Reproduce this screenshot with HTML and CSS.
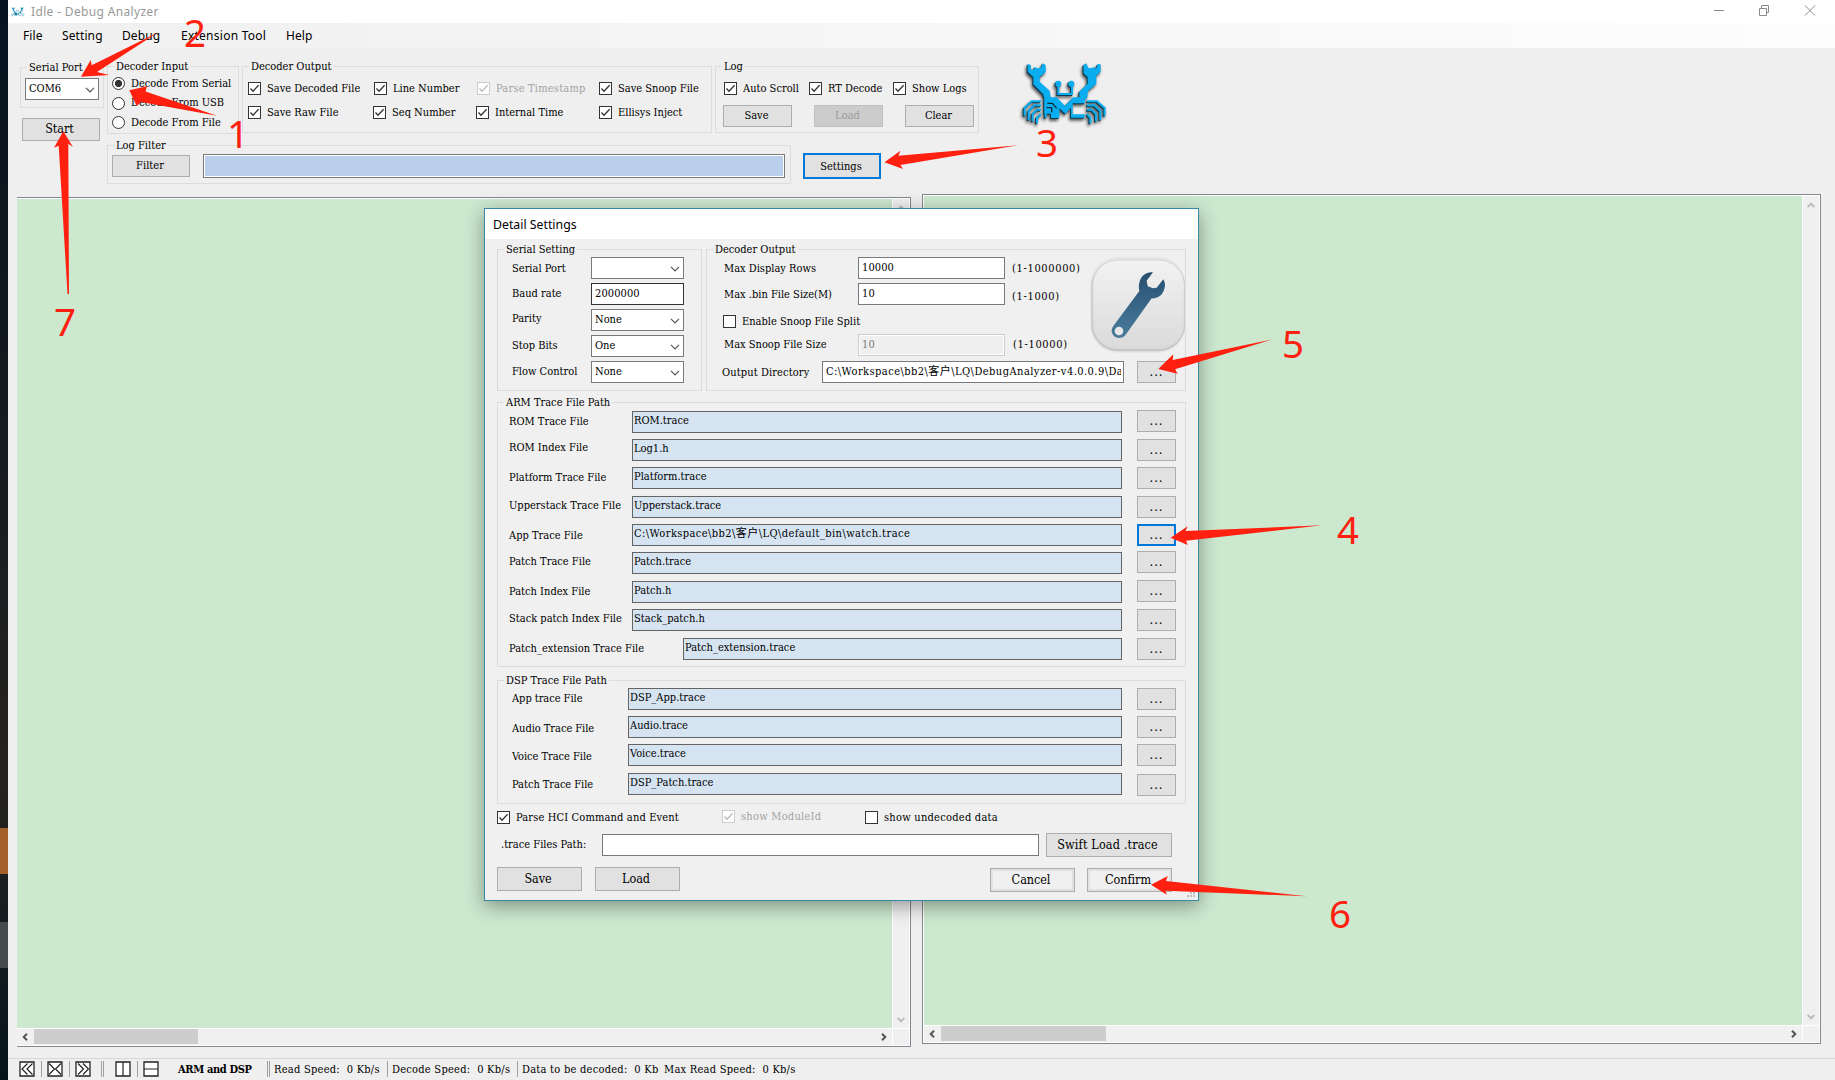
FILE: index.html
```html
<!DOCTYPE html>
<html lang="en">
<head>
<meta charset="utf-8">
<title>Debug Analyzer</title>
<link rel="stylesheet" href="styles.css">
</head>
<body>
<svg class="defs" width="0" height="0">
  <symbol id="tick" viewBox="0 0 13 13"><path d="M2.5 6.5 5 9.2 10.6 3.2" fill="none" stroke="currentColor" stroke-width="1.3"/></symbol>
  <symbol id="drop" viewBox="0 0 10 6"><path d="M1 .8 5 4.8 9 .8" fill="none" stroke="#555" stroke-width="1.2"/></symbol>
  <symbol id="arrow" viewBox="0 0 8 8"><path d="M6 .7 2.7 4 6 7.3" fill="none" stroke="currentColor" stroke-width="2"/></symbol>
  <symbol id="crab" viewBox="0 0 315 240">
    <g fill="currentColor">
      <path d="M50 26 60 31V43L68 45 71 35 79 40 90 38 95 25 104 30V50L94 60 86 65V80L116 107 119 127 137 127 162 152 187 127H205V110L230 86V66L218 55 217 30 226 25 232 39 241 39 251 36 254 44 260 27 269 28V50L256 62V86L231 108 229 127 222 134V145H185V178H221V188H180V158L163 176 145 160V189H120V176H100V128L96 117 67 88V66L50 50Z"/>
      <circle cx="142" cy="86" r="9"/><circle cx="181" cy="86" r="9"/>
    </g>
    <g fill="none" stroke="currentColor" stroke-width="6">
      <path d="M142 90V117H183V90"/>
      <path d="M90 139H62L41 159V182M90 151H70L53 168V195M90 164H78L65 177V199M90 177 78 188V205M228 139H258L281 159V182M228 151H250L268 168V195M228 164H242L255 177V199M228 177 238 188V205M104 130V188"/>
    </g>
    <path d="M109 145H124L137 160M107 158H122V172" fill="none" stroke="#0b2c38" stroke-width="4"/>
  </symbol>
</svg>
<div class="desktop"><i class="tile orange"></i><i class="tile grey"></i></div>
<div class="window">
  <header class="titlebar">
    <svg class="appicon" viewBox="15 15 285 205"><use href="#crab" width="315" height="240"/></svg>
    <span class="apptitle">Idle - Debug Analyzer</span>
    <svg class="winbtns" width="110" height="12" fill="none" stroke="#8a8a8a">
      <path d="M0 6.5h10M45.500 4.500h7v7h-7zM47.500 4.500v-3h7v7h-2M91 1.500l10 10M101 1.500l-10 10"/>
    </svg>
  </header>
  <nav class="menubar"><span class="m1">File</span><span class="m2">Setting</span><span class="m3">Debug</span><span class="m4">Extension Tool</span><span class="m5">Help</span></nav>

  <section class="toolbar">
    <div class="portcol">
      <fieldset class="g-port"><legend>Serial Port</legend>
        <div class="combo">COM6<svg><use href="#drop"/></svg></div>
      </fieldset>
      <button class="btn big start">Start</button>
    </div>
    <div class="maincol">
      <div class="groups">
        <fieldset class="g-input"><legend>Decoder Input</legend>
          <label class="radio on"><i></i>Decode From Serial</label>
          <label class="radio"><i></i>Decode From USB</label>
          <label class="radio"><i></i>Decode From File</label>
        </fieldset>
        <fieldset class="g-output"><legend>Decoder Output</legend>
          <div class="checks">
            <label class="check"><i><svg><use href="#tick"/></svg></i><span>Save Decoded File</span></label>
            <label class="check"><i><svg><use href="#tick"/></svg></i><span>Line Number</span></label>
            <label class="check off stamp"><i><svg><use href="#tick"/></svg></i><span>Parse Timestamp</span></label>
            <label class="check"><i><svg><use href="#tick"/></svg></i><span>Save Snoop File</span></label>
            <label class="check"><i><svg><use href="#tick"/></svg></i><span>Save Raw File</span></label>
            <label class="check left"><i><svg><use href="#tick"/></svg></i><span>Seq Number</span></label>
            <label class="check left"><i><svg><use href="#tick"/></svg></i><span>Internal Time</span></label>
            <label class="check"><i><svg><use href="#tick"/></svg></i><span>Ellisys Inject</span></label>
          </div>
        </fieldset>
        <fieldset class="g-log"><legend>Log</legend>
          <div class="logchecks">
            <label class="check"><i><svg><use href="#tick"/></svg></i><span>Auto Scroll</span></label>
            <label class="check"><i><svg><use href="#tick"/></svg></i><span>RT Decode</span></label>
            <label class="check"><i><svg><use href="#tick"/></svg></i><span>Show Logs</span></label>
          </div>
          <div class="logbtns"><button class="btn">Save</button><button class="btn dis">Load</button><button class="btn">Clear</button></div>
        </fieldset>
      </div>
      <div class="filterrow">
        <fieldset class="g-filter"><legend>Log Filter</legend>
          <div class="filterbody"><button class="btn">Filter</button><div class="filterbox"></div></div>
        </fieldset>
        <button class="btn focus settings">Settings</button>
      </div>
    </div>
    <svg class="logo" width="105" height="80"><use href="#crab"/></svg>
  </section>

  <main class="panes">
    <section class="pane first">
      <div class="view"></div>
      <div class="vbar"><svg class="up"><use href="#arrow"/></svg><svg class="down"><use href="#arrow"/></svg></div>
      <div class="hbar"><svg><use href="#arrow"/></svg><i></i><svg class="right"><use href="#arrow"/></svg></div>
      <div class="corner"></div>
    </section>
    <section class="pane second">
      <div class="view"></div>
      <div class="vbar"><svg class="up"><use href="#arrow"/></svg><svg class="down"><use href="#arrow"/></svg></div>
      <div class="hbar"><svg><use href="#arrow"/></svg><i></i><svg class="right"><use href="#arrow"/></svg></div>
      <div class="corner"></div>
    </section>
  </main>

  <footer class="status">
    <svg width="145" height="16" viewBox="0 0 145 16" fill="none">
      <g fill="#fff" stroke="#222" stroke-width="1.300"><path d="M1 1h14v14H1zM29 1h14v14H29zM57 1h14v14H57zM97 1h14v14H97zM125 1h14v14h-14z"/></g>
      <path stroke="#222" stroke-width="1.200" d="M8.500 2.500 3 8l5.500 5.500M13.500 2.500 8 8l5.500 5.500M30 2.500 35.500 8 30 13.500M42 2.500 36.500 8 42 13.500M59 2.500 64.500 8 59 13.500M64 2.500 69.500 8 64 13.500M104 1v14M125 8h14"/>
      <path stroke="#a0a0a0" d="M22.500 0v16M50.500 0v16M82.500 0v16M84.500 0v16M118.500 0v16"/>
    </svg>
    <b>ARM and DSP</b><i class="sep dbl"></i>
    <span class="s1">Read Speed:&nbsp; 0 Kb/s</span><i class="sep"></i>
    <span class="s2">Decode Speed:&nbsp; 0 Kb/s</span><i class="sep"></i>
    <span class="s3">Data to be decoded:&nbsp; 0 Kb</span>
    <span class="s4">Max Read Speed:&nbsp; 0 Kb/s</span>
  </footer>
</div>

<div class="dialog">
  <div class="dtitle">Detail Settings</div>
  <div class="dtop">
    <fieldset class="g-serial"><legend>Serial Setting</legend>
      <div class="srow"><span>Serial Port</span><div class="combo"><svg><use href="#drop"/></svg></div></div>
      <div class="srow"><span>Baud rate</span><div class="combo strong">2000000</div></div>
      <div class="srow"><span>Parity</span><div class="combo">None<svg><use href="#drop"/></svg></div></div>
      <div class="srow"><span>Stop Bits</span><div class="combo">One<svg><use href="#drop"/></svg></div></div>
      <div class="srow"><span>Flow Control</span><div class="combo">None<svg><use href="#drop"/></svg></div></div>
    </fieldset>
    <fieldset class="g-dec"><legend>Decoder Output</legend>
      <div class="drow"><span>Max Display Rows</span><div class="field">10000</div><span class="range">(1-1000000)</span></div>
      <div class="drow r2"><span>Max .bin File Size(M)</span><div class="field">10</div><span class="range">(1-1000)</span></div>
      <label class="check snoop"><i></i><span>Enable Snoop File Split</span></label>
      <div class="drow r3"><span>Max Snoop File Size</span><div class="field disabled">10</div><span class="range">(1-10000)</span></div>
      <div class="drow r4"><span>Output Directory</span><div class="field dir"><span>C:\Workspace\bb2\客户\LQ\DebugAnalyzer-v4.0.0.9\Da</span></div><button class="btn dots">...</button></div>
      <svg class="wrench" width="110" height="110" viewBox="0 0 330 330">
        <defs>
          <linearGradient id="plate" x1="0" y1="0" x2="0" y2="1"><stop offset="0" stop-color="#f2f2f2"/><stop offset="1" stop-color="#dadada"/></linearGradient>
          <linearGradient id="steel" x1="0" y1="0" x2="0" y2="1"><stop offset="0" stop-color="#264f70"/><stop offset="1" stop-color="#4b7c9d"/></linearGradient>
        </defs>
        <rect x="16" y="24" width="286" height="287" rx="82" fill="#e6e6e6"/>
        <rect x="19" y="34" width="281" height="273" rx="80" fill="#c6c6c6"/>
        <rect x="23" y="33" width="275" height="268" rx="76" fill="url(#plate)" stroke="#c9c9c9" stroke-width="2"/>
        <path d="M204 70 185 95 188 112 204 118 215 116 235 91C243 104 241 123 229 137 219 146 208 149 200 148L122 257C114 268 98 270 88 262 79 254 77 242 85 231L163 126C159 109 163 91 175 79 184 71 195 68 204 70Z" fill="url(#steel)"/>
        <circle cx="102" cy="246" r="13" fill="#e8e8e8"/>
      </svg>
    </fieldset>
  </div>
  <fieldset class="g-arm"><legend>ARM Trace File Path</legend>
    <div class="trow"><span>ROM Trace File</span><div class="path">ROM.trace</div><button class="btn dots">...</button></div>
    <div class="trow"><span>ROM Index File</span><div class="path">Log1.h</div><button class="btn dots">...</button></div>
    <div class="trow"><span>Platform Trace File</span><div class="path">Platform.trace</div><button class="btn dots">...</button></div>
    <div class="trow"><span>Upperstack Trace File</span><div class="path">Upperstack.trace</div><button class="btn dots">...</button></div>
    <div class="trow"><span>App Trace File</span><div class="path long">C:\Workspace\bb2\客户\LQ\default_bin\watch.trace</div><button class="btn dots focus">...</button></div>
    <div class="trow"><span>Patch Trace File</span><div class="path">Patch.trace</div><button class="btn dots">...</button></div>
    <div class="trow"><span>Patch Index File</span><div class="path">Patch.h</div><button class="btn dots">...</button></div>
    <div class="trow"><span>Stack patch Index File</span><div class="path">Stack_patch.h</div><button class="btn dots">...</button></div>
    <div class="trow wide"><span>Patch_extension Trace File</span><div class="path">Patch_extension.trace</div><button class="btn dots">...</button></div>
  </fieldset>
  <fieldset class="g-dsp"><legend>DSP Trace File Path</legend>
    <div class="trow"><span>App trace File</span><div class="path">DSP_App.trace</div><button class="btn dots">...</button></div>
    <div class="trow"><span>Audio Trace File</span><div class="path">Audio.trace</div><button class="btn dots">...</button></div>
    <div class="trow"><span>Voice Trace File</span><div class="path">Voice.trace</div><button class="btn dots">...</button></div>
    <div class="trow"><span>Patch Trace File</span><div class="path">DSP_Patch.trace</div><button class="btn dots">...</button></div>
  </fieldset>
  <div class="options">
    <label class="check"><i><svg><use href="#tick"/></svg></i><span>Parse HCI Command and Event</span></label>
    <label class="check off"><i><svg><use href="#tick"/></svg></i><span>show ModuleId</span></label>
    <label class="check"><i></i><span>show undecoded data</span></label>
  </div>
  <div class="swift"><span>.trace Files Path:</span><div class="field"></div><button class="btn big">Swift Load .trace</button></div>
  <div class="actions"><button class="btn big">Save</button><button class="btn big">Load</button><button class="btn big ring cancel">Cancel</button><button class="btn big ring">Confirm</button></div>
  <svg class="grip" width="9" height="9" fill="#bdbdbd"><path d="M6 0h2v2h-2zM3 3h2v2h-2zM6 3h2v2h-2zM0 6h2v2h-2zM3 6h2v2h-2zM6 6h2v2h-2z"/></svg>
</div>

<svg class="marks" width="1835" height="1080" viewBox="0 0 1835 1080">
  <polygon points="129.300,90.300 147,86.300 145.500,91.500 217,115.700 141,102 136.700,106"/>
  <polygon points="81,76.700 90.700,60 91.700,65.300 158.300,32.300 97,72 109,75"/>
  <polygon points="884.500,162.300 900.400,150.700 898.400,155.700 1018,145.300 900.400,165 903,169"/>
  <polygon points="1170.600,537.700 1187.800,526.300 1185.400,531 1322,525.300 1186,540.700 1187.800,545"/>
  <polygon points="1158.300,369 1173.300,354.300 1172.700,360 1272,339.400 1175,369.300 1177.700,373.700"/>
  <polygon points="1151,884.700 1167.800,876 1166,881 1306.600,896.300 1165.400,890.700 1166.800,894.700"/>
  <polygon points="63.300,131.300 54,147.700 58.700,145.700 67.500,294 69,294 68.300,143.700 73,147"/>
  <text x="227" y="148">1</text>
  <text x="184" y="47">2</text>
  <text x="1036" y="157">3</text>
  <text x="1337" y="544">4</text>
  <text x="1282" y="358">5</text>
  <text x="1329" y="928">6</text>
  <text x="54" y="336">7</text>
</svg>
</body>
</html>
```
FILE: styles.css
```css
* { box-sizing: border-box; }
body {
  margin: 0; width: 1835px; height: 1080px; overflow: hidden; display: flex; position: relative;
  font: 11px/14px "DejaVu Serif Condensed", "DejaVu Serif", "Noto Sans CJK SC", serif;
  font-stretch: condensed; color: #000; background: #efefef;
}
.defs { position: absolute; }
fieldset { margin: 0; padding: 0; border: 1px solid #dcdcdc; min-width: 0; position: relative; }
legend { margin-left: 6px; padding: 0 2px; height: 14px; line-height: 16px; white-space: nowrap; }
span, label, b { white-space: nowrap; }

.desktop { width: 8px; flex: none; background: linear-gradient(#06131f, #12191f 35%, #262320 72%, #141c20 87%, #06131b); display: flex; flex-direction: column; }
.tile { display: block; height: 46px; }
.orange { margin-top: 828px; background: #a55f28; }
.grey { margin-top: 48px; background: #454b4d; }
.window { width: 1827px; display: flex; flex-direction: column; background: #efefef; }

.titlebar { height: 23px; background: #fff; display: flex; align-items: center; font-family: "Noto Sans", "Open Sans", sans-serif; font-size: 12px; color: #999; }
.appicon { width: 15px; height: 12px; margin: 0 6px 0 2px; color: #2391b5; }
.apptitle { letter-spacing: .34px; margin-top: 1px; }
.winbtns { margin: -3px 11px 0 auto; }
.menubar { height: 25px; background: linear-gradient(90deg, #f0f0f0, #fdfdfd); display: flex; font: 12px/26px "Noto Sans", "Open Sans", sans-serif; letter-spacing: .1px; padding-left: 15px; }
.menubar span { flex: none; }
.m1 { width: 39px; } .m2 { width: 60px; } .m3 { width: 59px; } .m4 { width: 105px; letter-spacing: .25px; }

.toolbar { height: 146px; display: flex; padding-left: 12px; flex: none; }
.portcol { width: 87px; padding-top: 12px; }
.g-port { width: 84px; height: 48px; }
.g-port .combo { width: 74px; margin: 4px 0 0 4px; }
.combo, .field { background: #fff; border: 1px solid #7a7a7a; height: 22px; line-height: 19px; padding-left: 3px; display: flex; overflow: hidden; }
.combo svg { width: 10px; height: 6px; margin: 8px 3px 0 auto; }
.combo.strong { border-color: #333; letter-spacing: .1px; }
.btn { font: inherit; padding: 0 2px 0 0; margin: 0; height: 22px; background: #e1e1e1; border: 1px solid #adadad; color: #000; white-space: nowrap; flex: none; border-radius: 0; line-height: 20px; }
.btn.big { font-size: 12.5px; letter-spacing: -.05px; padding-right: 3px; line-height: 22px; }
.btn.dis { background: #ccc; border-color: #bfbfbf; color: #9a9a9a; }
.btn.focus { border: 2px solid #0078d7; line-height: 18px; }
.btn.start { width: 78px; height: 23px; margin: 10px 0 0 2px; display: block; line-height: 18px; padding-bottom: 2px; }
.maincol { padding-top: 11px; }
.groups { display: flex; height: 75px; }
.g-input { width: 132px; height: 75px; margin-right: 3px; }
.radio { display: flex; align-items: center; height: 19.500px; padding-left: 4px; gap: 6px; position: relative; top: 1px; }
.radio i { width: 13px; height: 13px; border: 1px solid #333; border-radius: 50%; background: #fff; }
.radio.on i { background: radial-gradient(circle, #333 3.200px, #fff 4px); }
.g-output { width: 470px; height: 74px; margin-right: 3px; }
.check { display: flex; gap: 6px; height: 14px; line-height: 13px; }
.check i { width: 13px; height: 13px; border: 1px solid #333; background: #fff; flex: none; color: #333; display: block; }
.check i svg { display: block; width: 13px; height: 13px; margin: -1px; }
.check.off { color: #a3a3a3; } .check.off i { border-color: #ccc; color: #bbb; }
.check.stamp { letter-spacing: .2px; }
.checks { display: grid; grid-template-columns: 126px 103px 122px auto; row-gap: 10px; padding: 9px 0 0 5px; }
.check.left { margin-left: -1px; }
.g-log { width: 264px; height: 74px; }
.logchecks { display: flex; padding: 9px 0 0 8px; }
.logchecks .check:nth-child(1) { width: 85px; } .logchecks .check:nth-child(2) { width: 84px; }
.logbtns { display: flex; gap: 22px; padding: 9px 0 0 7px; }
.logbtns .btn { width: 69px; }
.filterrow { display: flex; margin-top: 4px; }
.g-filter { width: 684px; height: 46px; }
.filterbody { display: flex; padding: 2px 0 0 4px; gap: 13px; }
.filterbody .btn { width: 78px; margin-top: 1px; }
.filterbox { width: 582px; height: 24px; border: 1px solid #7a7a7a; background: #b9cfea; box-shadow: inset 0 0 0 1px #fff; }
.settings { width: 78px; height: 26px; margin: 15px 0 0 12px; }
.btn.settings { height: 26px; margin: 15px 0 0 12px; line-height: 23px; }
.logo { color: #0aaef0; margin: 7px 0 0 32px; filter: drop-shadow(-1px 1px 0 #0d3a4e) drop-shadow(-1px 2px 1.500px #555); }

.panes { display: flex; flex: 1; padding-left: 9px; align-items: flex-start; }
.pane { display: grid; border: 1px solid #828790; background: #fff; padding: 1px; gap: 1px; flex: none; }
.first { width: 894px; height: 850px; margin: 3px 11px 0 0; border-left: 0; padding-left: 0; grid-template: 1fr 16px / 1fr 16px; }
.second { width: 899px; height: 850px; grid-template: 1fr 16px / 1fr 16px; }
.view { background: #cce8cf; }
.vbar, .hbar, .corner { background: #f0f0f0; }
.vbar { display: flex; flex-direction: column; justify-content: space-between; align-items: center; padding: 5px 0 4px; color: #bdbdbd; }
.pane svg { width: 8px; height: 8px; }
.up { transform: rotate(90deg); } .down { transform: rotate(-90deg); }
.hbar { display: flex; align-items: center; color: #555; padding: 0 4px 1px; gap: 5px; }
.hbar i { width: 164px; height: 15px; background: #cdcdcd; }
.second .hbar i { width: 165px; }
.right { transform: scaleX(-1); margin-left: auto; }

.status { height: 22px; border-top: 1px solid #d7d7d7; display: flex; padding: 2px 0 0 11px; line-height: 17px; flex: none; }
.status svg { flex: none; margin-right: 14px; }
.status b { width: 89px; letter-spacing: -.35px; }
.sep { width: 1px; height: 16px; background: #a0a0a0; margin-right: 4px; }
.dbl { width: 3px; background: linear-gradient(90deg, #a0a0a0 1px, #efefef 1px 2px, #a0a0a0 2px); }
.status span { letter-spacing: .25px; }
.s1 { width: 113px; } .s2 { width: 125px; } .s3 { width: 142px; }

.dialog { position: absolute; left: 484px; top: 208px; width: 715px; height: 693px; background: #f0f0f0; border: 1px solid #3b87a3; box-shadow: 0 5px 18px rgba(0,0,0,.38); padding: 0 12px; }
.dtitle { height: 30px; margin: 0 -12px; background: #fff; font: 12.300px/31px "Noto Sans", "Open Sans", sans-serif; padding-left: 8px; }
.dtop { display: flex; gap: 4px; margin-top: 3px; }
.g-serial { width: 205px; height: 149px; flex: none; }
.srow { display: flex; justify-content: space-between; height: 26px; padding: 0 17px 0 14px; line-height: 22px; }
.srow .combo { width: 93px; }
.g-serial legend + .srow { margin-top: 1px; line-height: 23px; }
.srow:nth-child(4) span { margin-top: -1px; }
.g-dec { width: 480px; height: 149px; flex: none; }
.drow { display: flex; height: 26px; padding-left: 17px; line-height: 22px; }
.g-dec legend + .drow { margin-top: 1px; line-height: 23px; }
.drow > span:first-child { width: 134px; }
.drow .field { width: 147px; margin-right: 7px; flex: none; line-height: 19px; letter-spacing: .1px; }
.range { letter-spacing: .65px; }
.r2 > span { margin-top: 1px; } .r2 > span:last-child { margin-top: 3px; }
.snoop { margin: 6px 0 5px 16px; }
.r3 { height: 28px; } .r3 > span:last-child { margin-left: 1px; }
.field.disabled { background: #efefef; border-color: #ccc; color: #777; box-shadow: inset 0 0 0 1px #fff; }
.drow.r4 { padding-left: 15px; } .drow.r4 > span:first-child { width: 100px; letter-spacing: .1px; }
.drow .field.dir { width: 302px; margin-right: 13px; padding-right: 2px; letter-spacing: .45px; }
.r4 .field, .r4 .btn { margin-top: -1px; }
.dir span { overflow: hidden; }
.dots { width: 39px; font-size: 13px; letter-spacing: 1px; padding: 0; }
.wrench { position: absolute; left: 378px; top: -7px; }
.g-arm { width: 689px; height: 272px; margin-top: 4px; }
.trow { display: flex; height: 28px; padding-left: 11px; line-height: 22px; }
.g-arm legend + .trow { margin-top: 2px; }
.trow > span { width: 123px; }
.path { width: 490px; height: 22px; border: 1px solid #646464; background: #d6e4f2; padding-left: 1px; line-height: 18px; margin-right: 15px; flex: none; }
.long { letter-spacing: .42px; }
.wide > span { width: 174px; } .wide .path { width: 439px; }
.g-arm .trow:nth-child(4), .g-arm .trow:nth-child(7), .g-arm .trow:nth-child(9) { height: 29px; }
.g-arm .trow:nth-child(2) .btn, .g-arm .trow:nth-child(7) .btn, .g-arm .trow:nth-child(8) .btn { margin-top: -1px; }
.g-arm .trow:nth-child(3) > span { margin-top: -2px; }
.g-arm .trow:nth-child(5) > span { margin-top: -1px; }
.g-arm .trow:nth-child(6) > span { margin-top: 1px; }
.g-arm .trow:nth-child(7) > span, .g-arm .trow:nth-child(9) > span { margin-top: -1px; }
.g-dsp { width: 689px; height: 131px; margin-top: 6px; }
.g-dsp .trow { padding-left: 14px; line-height: 22px; }
.g-dsp .trow > span { width: 116px; letter-spacing: -.05px; } .g-dsp .path { width: 494px; }
.g-dsp legend + .trow { margin-top: 1px; }
.g-dsp .trow:nth-child(4) { height: 29px; }
.g-dsp .trow:nth-child(3) > span, .g-dsp .trow:nth-child(4) > span, .g-dsp .trow:nth-child(5) > span { margin-top: 2px; }
.g-dsp .trow:nth-child(5) > span { margin-top: 1px; }
.g-dsp .trow:nth-child(5) .btn { margin-top: 1px; }
.options { display: flex; margin-top: 7px; }
.options .check:nth-child(1) { width: 225px; letter-spacing: .15px; }
.options .check:nth-child(2) { width: 143px; margin-top: -1px; letter-spacing: .25px; }
.options .check:nth-child(3) { letter-spacing: .25px; }
.swift { display: flex; margin-top: 8px; height: 34px; line-height: 23px; padding-left: 4px; }
.swift span { width: 101px; }
.swift .field { width: 437px; margin: 1px 7px 0 0; }
.swift .btn { width: 126px; height: 24px; letter-spacing: .15px; }
.actions { display: flex; gap: 13px; }
.actions .btn { width: 85px; height: 24px; }
.actions .ring { background: #f0f0f0; box-shadow: inset 0 0 0 2px #e1e1e1; margin-top: 1px; }
.actions .cancel { margin-left: 297px; margin-right: -1px; }
.grip { position: absolute; right: 2px; bottom: 2px; }

.marks { position: absolute; left: 0; top: 0; fill: #ff2010; font: 38.500px "Noto Sans", sans-serif; }
```
